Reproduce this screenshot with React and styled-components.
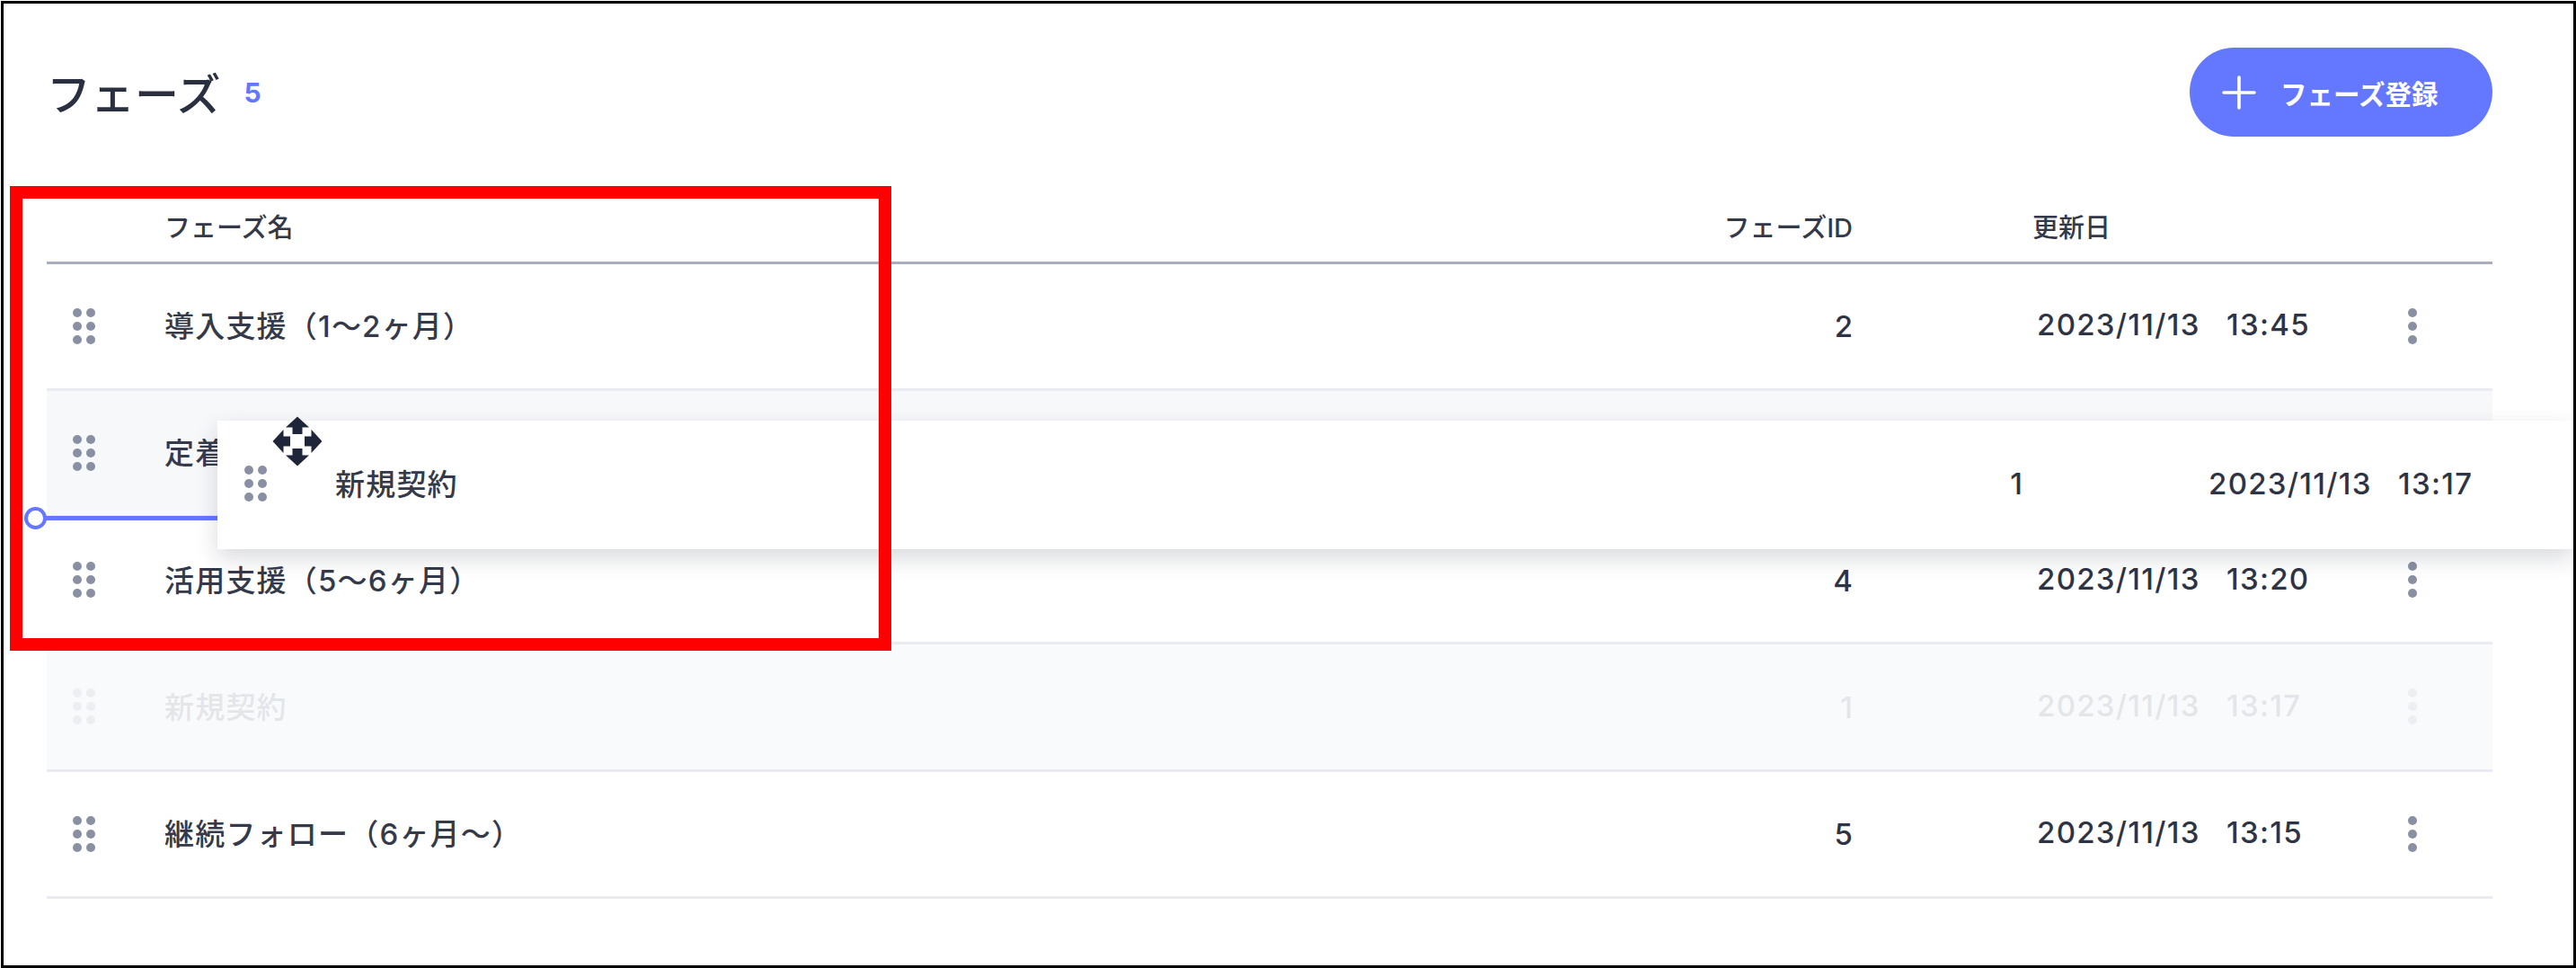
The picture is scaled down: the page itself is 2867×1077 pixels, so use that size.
import React from "react";
import styled, { createGlobalStyle } from "styled-components";
import { Plus } from "lucide-react";

const GlobalStyle = createGlobalStyle`
  html, body {
    margin: 0;
    padding: 0;
    background: #fff;
  }
  body {
    font-family: Inter, "Noto Sans CJK JP", sans-serif;
    color: #2f3445;
  }
`;

const Frame = styled.div`
  position: relative;
  box-sizing: border-box;
  width: 2866px;
  height: 1076px;
  margin: 1px 0 0 1px;
  border: 3px solid #000;
  background: #fff;
  overflow: hidden;
  padding: 49px 90px 0 48px;
`;

const TitleBar = styled.div`
  display: flex;
  align-items: center;
  justify-content: space-between;
  height: 99px;
`;

const TitleWrap = styled.div`
  display: flex;
  align-items: center;
  gap: 26px;
`;

const Title = styled.h1`
  position: relative;
  top: -1px;
  margin: 0;
  font-size: 49px;
  line-height: 1;
  font-weight: 500;
  font-family: "Noto Sans CJK JP", sans-serif;
  color: #2b3040;
`;

const Count = styled.span`
  font-size: 30px;
  font-weight: 700;
  color: #6478ff;
`;

const AddButton = styled.button`
  display: flex;
  align-items: center;
  gap: 17px;
  box-sizing: border-box;
  width: 337px;
  height: 99px;
  padding: 0 0 0 26px;
  border: 0;
  border-radius: 50px;
  background: #6478ff;
  color: #fff;
  font-family: "Noto Sans CJK JP", sans-serif;
  font-size: 29.5px;
  font-weight: 700;
`;

const Table = styled.div`
  margin-top: 72.5px;
`;

// handle / name / id / date / more
const columns = "131px 1fr 200px 618px 94px";

const HeaderRow = styled.div`
  display: grid;
  grid-template-columns: ${columns};
  align-items: center;
  height: 69px;
  padding-bottom: 14px;
  box-sizing: border-box;
  border-bottom: 3px solid #a9adbf;
  font-size: 29px;
  font-weight: 500;
  color: #343949;
`;

const HeaderCell = styled.div`
  grid-column: ${(p) => p.$col};
  text-align: ${(p) => p.$align || "left"};
  padding-left: ${(p) => p.$pl || 0}px;
`;

const Row = styled.div`
  display: grid;
  grid-template-columns: ${columns};
  align-items: center;
  box-sizing: border-box;
  height: 141.25px;
  border-bottom: 3px solid #e9eaf2;
  background: ${(p) => p.$bg || "transparent"};
  & > * {
    opacity: ${(p) => (p.$ghost ? 0.1 : 1)};
  }
`;

const Handle = styled.div`
  display: grid;
  grid-template-columns: 10px 10px;
  grid-auto-rows: 10px;
  gap: 5px;
  width: 25px;
  margin-left: 29px;
`;

const Dot = styled.span`
  width: 10px;
  height: 10px;
  border-radius: 50%;
  background: #8a90a4;
`;

const Name = styled.div`
  margin-bottom: 3px;
  font-size: 33px;
  letter-spacing: 1.2px;
  font-weight: 500;
  color: #353a4b;
  white-space: nowrap;
`;

const PhaseId = styled.div`
  position: relative;
  top: 2px;
  margin-bottom: 3px;
  font-size: 33px;
  font-weight: 500;
  text-align: right;
  color: #2f3445;
`;

const DateText = styled.div`
  margin-bottom: 3px;
  padding-left: ${(p) => p.$pl || 0}px;
  font-size: 33px;
  font-weight: 500;
  letter-spacing: 1.3px;
  word-spacing: 19px;
  white-space: nowrap;
  color: #2f3445;
`;

const MoreDots = styled.div`
  display: flex;
  flex-direction: column;
  gap: 5px;
  align-items: center;
  width: 10px;
`;

const DragCard = styled.div`
  position: absolute;
  left: 238px;
  top: 464px;
  right: 0;
  height: 143px;
  padding-bottom: 3px;
  box-sizing: border-box;
  background: #fff;
  box-shadow: 0 10px 24px rgba(20, 25, 50, 0.16);
  display: flex;
  align-items: center;
`;

const CardHandle = styled(Handle)`
  margin-left: 30px;
`;

const CardName = styled(Name)`
  margin-left: 76px;
  width: 1858px;
`;

const CardId = styled(PhaseId)`
  top: 0;
  width: 20px;
  margin-bottom: 0;
`;

const CardDate = styled(DateText)`
  margin-left: 207px;
  margin-bottom: 0;
`;

const DropLine = styled.div`
  position: absolute;
  left: 34px;
  top: 570px;
  width: 210px;
  height: 5px;
  background: #6478ff;
`;

const DropKnob = styled.div`
  position: absolute;
  left: 23px;
  top: 560px;
  width: 25px;
  height: 25px;
  box-sizing: border-box;
  border: 4px solid #6478ff;
  border-radius: 50%;
  background: #fff;
`;

const MoveCursor = styled.svg`
  position: absolute;
  left: 295px;
  top: 455px;
  width: 64px;
  height: 64px;
`;

const Highlight = styled.div`
  position: absolute;
  left: 7px;
  top: 203px;
  width: 981px;
  height: 517px;
  box-sizing: border-box;
  border: 14px solid #ff0000;
  pointer-events: none;
`;

const Dots = ({ n }) => Array.from({ length: n }, (_, i) => <Dot key={i} />);

const rows = [
  { name: "導入支援（1〜2ヶ月）", id: 2, date: "2023/11/13 13:45" },
  { name: "定着支援（3〜4ヶ月）", id: 3, date: "2023/11/13 13:30", bg: "#f7f8fa" },
  { name: "活用支援（5〜6ヶ月）", id: 4, date: "2023/11/13 13:20" },
  { name: "新規契約", id: 1, date: "2023/11/13 13:17", bg: "#f9fafc", ghost: true },
  { name: "継続フォロー（6ヶ月〜）", id: 5, date: "2023/11/13 13:15" },
];

export default function App() {
  return (
    <>
      <GlobalStyle />
      <Frame>
        <TitleBar>
          <TitleWrap>
            <Title>フェーズ</Title>
            <Count>5</Count>
          </TitleWrap>
          <AddButton>
            <Plus size={58} strokeWidth={1.5} />
            フェーズ登録
          </AddButton>
        </TitleBar>

        <Table>
          <HeaderRow>
            <HeaderCell $col={2}>フェーズ名</HeaderCell>
            <HeaderCell $col={3} $align="right">フェーズID</HeaderCell>
            <HeaderCell $col={4} $pl={200}>更新日</HeaderCell>
          </HeaderRow>
          {rows.map((r) => (
            <Row key={r.id} $bg={r.bg} $ghost={r.ghost}>
              <Handle><Dots n={6} /></Handle>
              <Name>{r.name}</Name>
              <PhaseId>{r.id}</PhaseId>
              <DateText $pl={205}>{r.date}</DateText>
              <MoreDots><Dots n={3} /></MoreDots>
            </Row>
          ))}
        </Table>

        <DropLine />
        <DropKnob />
        <DragCard>
          <CardHandle><Dots n={6} /></CardHandle>
          <CardName>新規契約</CardName>
          <CardId>1</CardId>
          <CardDate>2023/11/13 13:17</CardDate>
        </DragCard>
        <MoveCursor viewBox="-32 -32 64 64">
          <rect x="-14" y="-14" width="28" height="28" fill="#fff" transform="rotate(45)" />
          {[0, 90, 180, 270].map((angle) => (
            <path
              key={angle}
              d="M0 -27.5 L13 -15.5 L5.5 -15.5 L5.5 -8 L-5.5 -8 L-5.5 -15.5 L-13 -15.5 Z"
              transform={`rotate(${angle})`}
              fill="#20263a"
              stroke="#fff"
              strokeWidth="1.2"
              strokeLinejoin="round"
              paintOrder="stroke"
            />
          ))}
        </MoveCursor>
        <Highlight />
      </Frame>
    </>
  );
}
